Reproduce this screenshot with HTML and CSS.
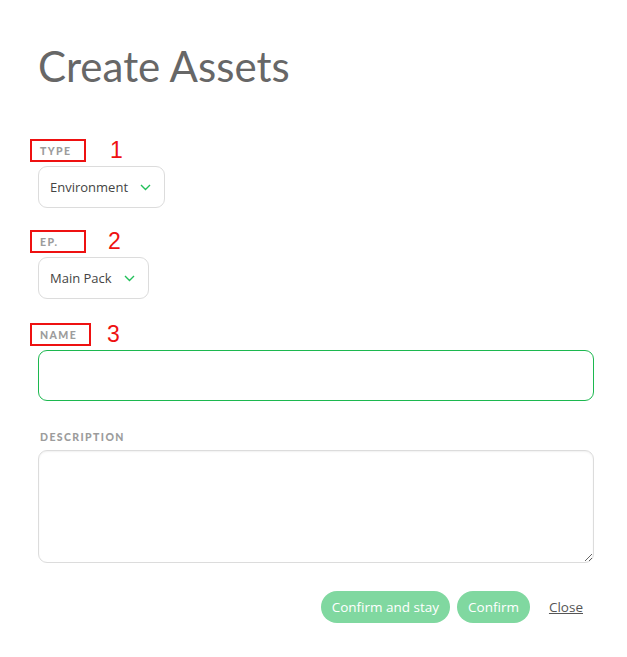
FILE: index.html
```html
<!DOCTYPE html>
<html>
<head>
<meta charset="utf-8">
<link rel="stylesheet" href="styles.css">
</head>
<body>
<div class="page">
  <h1 class="title">Create Assets</h1>

  <div class="field field-type">
    <div class="label-row">
      <span class="label-box box-sm"><span class="label">Type</span></span>
      <span class="mark mark-1">1</span>
    </div>
    <div class="select">
      <span class="select-text">Environment</span>
      <svg class="chev" width="11" height="7" viewBox="0 0 11 7"><path d="M1 1 L5.5 5.5 L10 1" fill="none" stroke="#22c05a" stroke-width="1.4"/></svg>
    </div>
  </div>

  <div class="field field-ep">
    <div class="label-row">
      <span class="label-box box-sm"><span class="label">Ep.</span></span>
      <span class="mark mark-2">2</span>
    </div>
    <div class="select">
      <span class="select-text">Main Pack</span>
      <svg class="chev" width="11" height="7" viewBox="0 0 11 7"><path d="M1 1 L5.5 5.5 L10 1" fill="none" stroke="#22c05a" stroke-width="1.4"/></svg>
    </div>
  </div>

  <div class="field field-name">
    <div class="label-row">
      <span class="label-box box-md"><span class="label">Name</span></span>
      <span class="mark mark-3">3</span>
    </div>
    <input class="input" type="text">
  </div>

  <div class="field field-desc">
    <div class="label plain">Description</div>
    <textarea class="textarea"></textarea>
  </div>

  <div class="actions">
    <button class="btn">Confirm and stay</button>
    <button class="btn">Confirm</button>
    <a class="close" href="#">Close</a>
  </div>
</div>
</body>
</html>
```

FILE: styles.css
```css
* { box-sizing: border-box; }
html, body { margin: 0; padding: 0; background: #fff; }
body { font-family: "Open Sans", "Noto Sans", sans-serif; }

.page {
  padding: 38px 33px 0 38px;
}

.title {
  margin: 0;
  font-family: Lato, sans-serif;
  font-weight: 400;
  font-size: 42px;
  line-height: 56px;
  color: #676767;
}

.field { display: flex; flex-direction: column; align-items: flex-start; }
.field-type { margin-top: 45px; }
.field-ep { margin-top: 22px; }
.field-name { margin-top: 24px; align-items: stretch; }
.field-desc { margin-top: 29px; align-items: stretch; }

.label-row { display: flex; align-items: center; height: 23px; }
.label-box {
  display: flex;
  align-items: center;
  height: 23px;
  margin-left: -8px;
  padding-left: 8px;
  border: 2px solid #ee1111;
}
.box-sm { width: 56px; }
.box-md { width: 61px; }
.field-name .label-row { align-self: flex-start; }

.label {
  font-family: Lato, sans-serif;
  font-weight: 900;
  font-size: 10.5px;
  letter-spacing: 1.4px;
  text-transform: uppercase;
  color: #9c9c9c;
}
.label.plain { margin-left: 2px; line-height: 14px; }

.mark {
  font-family: "Liberation Sans", sans-serif;
  font-size: 23px;
  line-height: 23px;
  color: #ee1111;
}
.mark-1 { margin-left: 24px; }
.mark-2 { margin-left: 22px; }
.mark-3 { margin-left: 16px; }

.select {
  margin-top: 4px;
  display: flex;
  align-items: center;
  gap: 12px;
  height: 42px;
  padding: 0 13px 0 11px;
  border: 1px solid #dcdcdc;
  border-radius: 9px;
  font-size: 13px;
  color: #444;
}
.chev { display: block; margin-top: 1px; }

.input {
  margin-top: 4px;
  height: 51px;
  border: 1px solid #1cb84f;
  border-radius: 9px;
  outline: none;
  background: #fff;
  font-family: inherit;
}

.textarea {
  margin-top: 6px;
  height: 113px;
  border: 1px solid #dcdcdc;
  border-radius: 9px;
  box-shadow: inset 0 1px 2px rgba(0,0,0,0.06);
  font-family: inherit;
  resize: vertical;
}

.actions {
  margin-top: 28px;
  display: flex;
  align-items: center;
  justify-content: flex-end;
  padding-right: 11px;
}
.btn {
  height: 32px;
  padding: 0 11px;
  border: none;
  border-radius: 16px;
  background: #80d8a0;
  color: #fff;
  font-family: "Open Sans", sans-serif;
  font-size: 13.5px;
  margin-right: 7px;
}
.close {
  margin-left: 12px;
  font-size: 13.5px;
  color: #555;
  text-decoration: underline;
}
```
